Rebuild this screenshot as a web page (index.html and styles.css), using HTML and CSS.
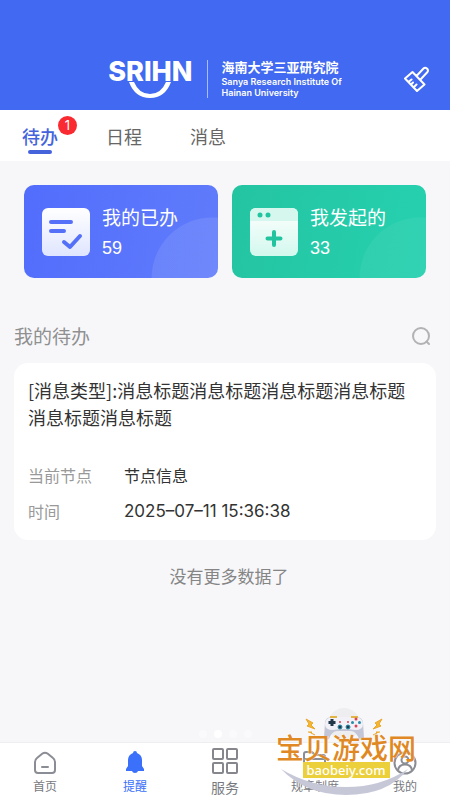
FILE: index.html
```html
<!DOCTYPE html>
<html lang="zh-CN">
<head>
<meta charset="utf-8">
<meta name="viewport" content="width=device-width, initial-scale=1">
<title>待办</title>
<link rel="stylesheet" href="styles.css">
</head>
<body>
<div class="app">
  <header class="header">
    <div class="brand">
      <div class="mark">
        <span class="mark-name">SRIHN</span>
        <svg class="mark-smile" viewBox="0 0 42 18" width="42" height="18" aria-hidden="true"><path d="M0 1H5Q10 13 21 13Q32 13 37 1H42Q36 17 21 17Q6 17 0 1Z" fill="#fff"/></svg>
      </div>
      <div class="brand-text">
        <strong class="brand-cn">海南大学三亚研究院</strong>
        <span class="brand-en">Sanya Research Institute Of<br>Hainan University</span>
      </div>
    </div>
    <button class="icon-button clean" aria-label="清理">
      <svg viewBox="0 0 28 28" width="28" height="28" fill="none" stroke="#fff" stroke-width="2" stroke-linecap="round" stroke-linejoin="round"><path d="M10.500 8 22.500 20.500 15 27 3 14.500ZM14.500 12 21.500 4.500Q23 3 25 4.500Q27 6.500 25 8.500L18.500 15.500M6.500 18 9.500 15.500M9 20.500 11 18.500M11.500 23.500 14.500 20.500"/></svg>
    </button>
  </header>

  <nav class="tabs" aria-label="消息分类">
    <a class="tab tab-active" href="#todo">待办<span class="badge">1</span></a>
    <a class="tab" href="#schedule">日程</a>
    <a class="tab" href="#message">消息</a>
  </nav>

  <main class="content">
    <div class="stats">
      <a class="stat stat-blue" href="#done">
        <svg class="stat-icon" viewBox="0 0 48 48" width="48" height="48" aria-hidden="true">
          <defs><linearGradient id="paper" x2="0" y2="1"><stop stop-color="#fff"/><stop offset="1" stop-color="#dfe5ff"/></linearGradient></defs>
          <rect width="48" height="48" rx="6" fill="url(#paper)"/>
          <path d="M9 14H29M9 23H22M22 34 28 39 38 28" fill="none" stroke="#5570f8" stroke-width="4" stroke-linecap="round" stroke-linejoin="round"/>
        </svg>
        <span class="stat-text"><span class="stat-name">我的已办</span><span class="stat-count">59</span></span>
      </a>
      <a class="stat stat-green" href="#started">
        <svg class="stat-icon" viewBox="0 0 48 48" width="48" height="48" aria-hidden="true">
          <defs><linearGradient id="window" x2="0" y2="1"><stop stop-color="#fff"/><stop offset="1" stop-color="#d2f8ed"/></linearGradient></defs>
          <rect width="48" height="48" rx="6" fill="url(#window)"/>
          <path d="M0 13V6Q0 0 6 0H42Q48 0 48 6V13Z" fill="#d5f7ee"/>
          <circle cx="10" cy="7" r="2.500" fill="#22c4a0"/><circle cx="18" cy="7" r="2.500" fill="#22c4a0"/>
          <path d="M24 24V37M17.500 30.500H30.500" stroke="#22c4a0" stroke-width="4" stroke-linecap="round"/>
        </svg>
        <span class="stat-text"><span class="stat-name">我发起的</span><span class="stat-count">33</span></span>
      </a>
    </div>

    <section class="todo">
      <div class="todo-head">
        <h2 class="todo-title">我的待办</h2>
        <button class="icon-button" aria-label="搜索">
          <svg viewBox="0 0 20 20" width="20" height="20" fill="none" stroke="#b2b2b5" stroke-width="2" stroke-linecap="round"><circle cx="10" cy="10" r="8"/><path d="M15.500 15.500 18 18"/></svg>
        </button>
      </div>
      <article class="card">
        <h3 class="card-title">[消息类型]:消息标题消息标题消息标题消息标题消息标题消息标题</h3>
        <dl class="details">
          <dt>当前节点</dt><dd>节点信息</dd>
          <dt>时间</dt><dd class="time">2025–07–11 15:36:38</dd>
        </dl>
      </article>
      <p class="no-more">没有更多数据了</p>
    </section>
    <div class="dots" aria-hidden="true"><i></i><i class="dot-on"></i><i></i><i></i></div>
  </main>

  <nav class="tabbar" aria-label="主导航">
    <a class="nav-item" href="#home">
      <svg viewBox="0 0 24 24" width="24" height="24" fill="none" stroke="#8b8d94" stroke-width="2" stroke-linejoin="round" stroke-linecap="round"><path d="M2 11Q2 8.500 4 7L9.500 2.500Q12 .800 14.500 2.500L20 7Q22 8.500 22 11V19Q22 22 19 22H5Q2 22 2 19ZM9 16H15"/></svg>
      <span>首页</span>
    </a>
    <a class="nav-item nav-active" href="#remind">
      <svg viewBox="0 0 24 24" width="24" height="24" fill="#3a70fa"><path d="M10 2Q10 0 12 0T14 2Q19 4 19 9V15L21 18V20H3V18L5 15V9Q5 4 10 2ZM9 20H15Q14.500 22 12 22T9 20Z"/></svg>
      <span>提醒</span>
    </a>
    <a class="nav-item nav-large" href="#service">
      <svg viewBox="0 0 26 26" width="26" height="26" fill="none" stroke="#85878c" stroke-width="2"><rect x="1" y="1" width="10" height="10" rx="1"/><rect x="15" y="1" width="10" height="10" rx="1"/><rect x="1" y="15" width="10" height="10" rx="1"/><rect x="15" y="15" width="10" height="10" rx="1"/></svg>
      <span>服务</span>
    </a>
    <a class="nav-item" href="#rules">
      <svg viewBox="0 0 24 24" width="24" height="24" fill="none" stroke="#8b8d94" stroke-width="2" stroke-linejoin="round"><path d="M1 20V3Q1 1 3 1H9L12 4H20Q22 4 22 6V20Q22 22 20 22H3Q1 22 1 20ZM1 8H22"/></svg>
      <span>规章制度</span>
    </a>
    <a class="nav-item" href="#mine">
      <svg viewBox="0 0 24 24" width="24" height="24" fill="none" stroke="#8b8d94" stroke-width="2"><circle cx="12" cy="12" r="10.500"/><circle cx="12" cy="9" r="3.500"/><path d="M5 19Q6 13.500 12 13.500T19 19"/></svg>
      <span>我的</span>
    </a>
  </nav>

  <div class="watermark">
    <svg class="watermark-art" viewBox="0 0 140 92" width="140" height="92" aria-hidden="true">
      <circle cx="68" cy="16" r="16" fill="#eeeef0"/>
      <path d="M5 61Q35 79 70 79T132 61Q112 87 70 87Q30 87 5 61Z" fill="#c6c8d8"/>
      <path d="M49 14Q50 9 56 9H80Q86 9 87 14L88 30Q87 34 83 31Q80 23 75 23H61Q56 23 53 31Q48 34 48 30Z" fill="#c3c6d6"/>
      <path d="M56 9H80Q87 10 87 16Q87 22 79 22Q68 20 57 22Q49 22 49 16Q49 10 56 9Z" fill="#f1f1f7"/>
      <path d="M54 9H61M75 9H82" stroke="#e2b445" stroke-width="2"/>
      <path d="M56 11V18M52.500 14.500H59.500" stroke="#23394a" stroke-width="3"/>
      <g fill="#d94358"><circle cx="80" cy="11" r="1.500"/><circle cx="80" cy="18" r="1.500"/><circle cx="64" cy="14" r="1"/><circle cx="72" cy="14" r="1"/></g>
      <g fill="#268daa"><circle cx="76.500" cy="14.500" r="1.500"/><circle cx="83.500" cy="14.500" r="1.500"/></g>
      <g fill="#23394a" stroke="#268daa"><circle cx="64" cy="19" r="2"/><circle cx="72" cy="19" r="2"/></g>
      <path d="M30 11 37 15 35 17 39 21 31 18 33 16ZM106 11 99 15 101 17 97 21 105 18 103 16ZM32 24 36 24 35 25 39 27M104 24 100 24 101 25 97 27" fill="#f5b82e" stroke="#eaa62b"/>
    </svg>
    <span class="watermark-name">宝贝游戏网</span>
    <span class="watermark-url">baobeiy.com</span>
  </div>
</div>
</body>
</html>
```
FILE: styles.css
```css
* {
  box-sizing: border-box;
}

body {
  margin: 0;
  background: #f7f7fa;
  color: #333;
  font-family: "Noto Sans CJK SC", sans-serif;
}

a {
  color: inherit;
  text-decoration: none;
}

h2,
h3,
p,
dl,
dd {
  margin: 0;
  font-weight: 400;
}

svg {
  display: block;
}

.app {
  position: relative;
  display: flex;
  flex-direction: column;
  min-height: 100vh;
}

.header {
  position: relative;
  display: flex;
  justify-content: center;
  padding: 58px 0 10px;
  background: #4169f1;
  color: #fff;
}

.brand {
  display: flex;
  gap: 14px;
}

.mark {
  display: flex;
  flex-direction: column;
  align-items: center;
}

.mark-name {
  font: 800 27px/27px Inter, sans-serif;
}

.mark-smile {
  margin-top: -4px;
}

.brand-text {
  display: flex;
  flex-direction: column;
  gap: 2px;
  margin: 2px 0;
  padding-left: 14px;
  border-left: 1px solid #a9bcff;
}

.brand-cn {
  font-size: 13px;
  font-weight: 700;
  line-height: 14px;
}

.brand-en {
  font: 600 9px/11px Inter, sans-serif;
}

.icon-button {
  padding: 0;
  border: 0;
  background: none;
}

.clean {
  position: absolute;
  right: 20px;
  bottom: 18px;
}

.tabs {
  display: flex;
  gap: 48px;
  height: 51px;
  padding: 0 22px;
  background: #fff;
  color: #666;
  font-size: 18px;
  line-height: 52px;
}

.tab {
  position: relative;
}

.tab-active {
  color: #4564dc;
  font-weight: 500;
}

.tab-active::after {
  content: "";
  position: absolute;
  bottom: 7px;
  left: 6px;
  width: 24px;
  height: 4px;
  border-radius: 2px;
  background: #4564dc;
}

.badge {
  position: absolute;
  top: 6px;
  right: -19px;
  width: 19px;
  height: 19px;
  border-radius: 50%;
  background: #f92a30;
  color: #fff;
  font: 13px/19px Inter, sans-serif;
  text-align: center;
}

.content {
  flex: 1;
  display: flex;
  flex-direction: column;
  padding: 24px 14px 4px;
}

.stats {
  display: grid;
  grid-template-columns: 1fr 1fr;
  gap: 14px;
  padding: 0 10px;
}

.stat {
  display: flex;
  align-items: center;
  gap: 12px;
  height: 93px;
  padding: 0 18px;
  border-radius: 10px;
  color: #fff;
}

.stat-blue {
  background: radial-gradient(circle at 97% 100%, #ffffff18 0 60px, #fff0 61px), linear-gradient(100deg, #526dfc, #607cfb);
}

.stat-green {
  background: radial-gradient(circle at 97% 100%, #ffffff0d 0 60px, #fff0 61px), linear-gradient(100deg, #24c4a1, #26d1b0);
}

.stat-text {
  display: flex;
  flex-direction: column;
  gap: 4px;
}

.stat-name {
  font-size: 19px;
  line-height: 28px;
}

.stat-count {
  font: 18px/26px "Liberation Sans", sans-serif;
}

.todo-head {
  display: flex;
  align-items: center;
  justify-content: space-between;
  margin-top: 44px;
  padding-right: 5px;
}

.todo-title {
  color: #909090;
  font-size: 19px;
  line-height: 28px;
}

.card {
  margin-top: 13px;
  padding: 14px 14px 17px;
  border-radius: 14px;
  background: #fff;
}

.card-title {
  font-size: 18px;
  line-height: 27px;
}

.details {
  display: grid;
  grid-template-columns: 80px 1fr;
  gap: 12px 16px;
  margin-top: 32px;
  font-size: 16px;
  line-height: 24px;
}

.details dt {
  color: #999;
}

.time {
  font: 17px/24px Inter, sans-serif;
}

.no-more {
  margin-top: 22px;
  padding-left: 8px;
  color: #858585;
  font-size: 17px;
  line-height: 28px;
  text-align: center;
}

.dots {
  display: flex;
  justify-content: center;
  gap: 7px;
  margin-top: auto;
}

.dots i {
  width: 8px;
  height: 8px;
  border-radius: 50%;
  background: #fafafc;
}

.dots .dot-on {
  background: #fff;
}

.tabbar {
  display: grid;
  grid-template-columns: repeat(5, 1fr);
  height: 58px;
  border-top: 1px solid #eeeef0;
  background: #fff;
  color: #777980;
  font-size: 12px;
  line-height: 18px;
}

.nav-item {
  display: flex;
  flex-direction: column;
  align-items: center;
  gap: 2px;
  padding-top: 8px;
}

.nav-active {
  color: #3a70fa;
}

.nav-large {
  gap: 4px;
  padding-top: 5px;
  font-size: 14px;
}

.watermark {
  position: absolute;
  right: 34px;
  bottom: 0;
  display: flex;
  flex-direction: column;
  align-items: center;
  width: 140px;
  height: 92px;
  padding-top: 25px;
}

.watermark-art {
  position: absolute;
  inset: 0;
}

.watermark-name {
  position: relative;
  color: #e08924;
  font-size: 28px;
  font-weight: 500;
  line-height: 29px;
  text-shadow: 1px 0 #fff8, -1px 0 #fff8;
  white-space: nowrap;
}

.watermark-url {
  position: relative;
  padding: 0 4px;
  background: #ecd03b;
  color: #fff;
  font: 500 13px/16px "Noto Sans", sans-serif;
}
```
